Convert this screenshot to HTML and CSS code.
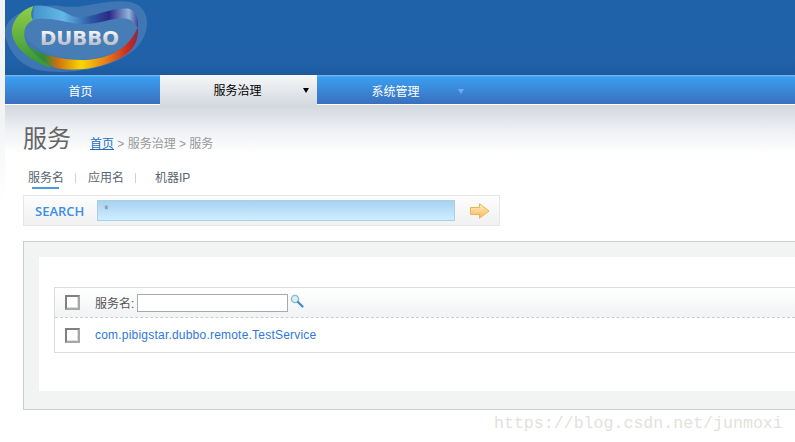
FILE: index.html
```html
<!DOCTYPE html>
<html lang="zh">
<head>
    <meta charset="UTF-8">
    <title>服务</title>
    <link rel="stylesheet" href="styles.css">
</head>
<body>
    <div class="page">
        <div class="header">
            <svg class="logo" width="150" height="75" viewBox="0 0 150 75">
                <defs>
                    <linearGradient id="bottomBand" x1="20" y1="0" x2="138" y2="0" gradientUnits="userSpaceOnUse">
                        <stop offset="0" stop-color="#4f9a3a"/>
                        <stop offset="0.2" stop-color="#2f8a3c"/>
                        <stop offset="0.32" stop-color="#d0700f"/>
                        <stop offset="0.52" stop-color="#f8d800"/>
                        <stop offset="0.72" stop-color="#e8801a"/>
                        <stop offset="0.92" stop-color="#c82a1e"/>
                        <stop offset="1" stop-color="#8a2a50"/>
                    </linearGradient>
                    <linearGradient id="topBand" x1="30" y1="0" x2="140" y2="0" gradientUnits="userSpaceOnUse">
                        <stop offset="0" stop-color="#3f8fc8"/>
                        <stop offset="0.3" stop-color="#64b8e6"/>
                        <stop offset="0.55" stop-color="#2a5aa6"/>
                        <stop offset="0.72" stop-color="#2c2a86"/>
                        <stop offset="0.9" stop-color="#8fb4da"/>
                        <stop offset="1" stop-color="#2c2a86"/>
                    </linearGradient>
                    <linearGradient id="leftBand" x1="0" y1="10" x2="0" y2="60" gradientUnits="userSpaceOnUse">
                        <stop offset="0" stop-color="#8ccb46"/>
                        <stop offset="1" stop-color="#3d9a38"/>
                    </linearGradient>
                    <linearGradient id="word" x1="0" y1="29" x2="0" y2="45" gradientUnits="userSpaceOnUse">
                        <stop offset="0" stop-color="#ffffff"/>
                        <stop offset="1" stop-color="#b8bec6"/>
                    </linearGradient>
                </defs>
                <path d="M5 35C2 18 30 3 60 6C85 10 105-2 130 2C150 6 152 30 138 46C118 68 70 76 38 70C20 66 8 50 5 35Z" fill="#6f96c4" fill-opacity="0.4"/>
                <path d="M24 30C24 14 50 12 72 18C95 24 118 6 133 17C142 26 135 44 112 53C85 63 60 60 42 50C32 45 24 38 24 30Z" fill="#4a80b8" fill-opacity="0.75"/>
                <path d="M34 6C46 4 60 10 72 16C88 22 110 6 130 9C136 12 139 20 138 28C136 26 135 24 132 21C120 13 100 26 80 24C62 22 48 16 33 20Z" fill="url(#topBand)"/>
                <path d="M34 6C20 10 11 22 12 33C13 46 30 62 52 68C40 58 28 50 26 42C22 32 25 24 33 20C30 16 31 10 34 6Z" fill="url(#leftBand)"/>
                <path d="M26 44C38 54 60 60 82 60C100 60 122 54 133 36C136 32 137 28 138 28C139 40 134 50 122 57C102 68 80 72 56 68C44 64 34 54 26 44Z" fill="url(#bottomBand)"/>
                <text class="logo-word" x="40" y="45" textLength="79" lengthAdjust="spacingAndGlyphs" fill="url(#word)">DUBBO</text>
            </svg>
        </div>
        <div class="nav">
            <a class="nav-item first">首页</a>
            <a class="nav-item active">服务治理<i class="arrow"></i></a>
            <a class="nav-item">系统管理<i class="arrow"></i></a>
        </div>
        <div class="content">
            <div class="title-row">
                <h1>服务</h1>
                <div class="crumbs"><a>首页</a> &gt; 服务治理 &gt; 服务</div>
            </div>
            <div class="tabs">
                <span class="tab current">服务名</span>
                <span class="tab">应用名</span>
                <span class="tab last">机器IP</span>
            </div>
            <div class="search-bar">
                <span class="search-label">SEARCH</span>
                <div class="search-input">*</div>
                <svg class="go" width="20" height="16" viewBox="0 0 20 16">
                    <defs>
                        <linearGradient id="goFill" x1="0" y1="0" x2="0" y2="1">
                            <stop offset="0" stop-color="#fff2b0"/>
                            <stop offset="1" stop-color="#ffb070"/>
                        </linearGradient>
                    </defs>
                    <path d="M.5 4.5H9.5V.7L19 8L9.5 15.3V11.5H.5Z" fill="url(#goFill)" stroke="#e3b94e"/>
                </svg>
            </div>
            <div class="panel">
                <div class="panel-inner">
                    <div class="list">
                        <div class="row head">
                            <span class="check"></span>
                            <label class="filter">服务名: <input class="filter-input" type="text"></label>
                            <svg class="lens" width="14" height="14" viewBox="0 0 14 14">
                                <circle cx="5" cy="5" r="3.6" fill="#d8eef8" stroke="#8fb8c8" stroke-width="1.4"/>
                                <path d="M8 8L12.5 12.5" stroke="#3c8ac8" stroke-width="2.2" stroke-linecap="round"/>
                            </svg>
                        </div>
                        <div class="row">
                            <span class="check"></span>
                            <a class="service">com.pibigstar.dubbo.remote.TestService</a>
                        </div>
                    </div>
                </div>
            </div>
        </div>
        <div class="watermark">https://blog.csdn.net/junmoxi</div>
    </div>
</body>
</html>
```
FILE: styles.css
```css
html, body {
    margin: 0;
    height: 442px;
    overflow: hidden;
    background: #fff;
}
body {
    font-family: "Liberation Sans", "Noto Sans CJK SC", sans-serif;
    font-size: 12px;
    color: #555;
}
.page {
    position: relative;
    height: 442px;
    padding-left: 5px;
    background: linear-gradient(#f2f4f4 0, #f2f4f4 120px, #fff 200px);
}
.header {
    height: 75px;
    background: linear-gradient(#2062aa 0, #2062aa 60px, #1d5a9e 75px);
}
.logo {
    display: block;
    margin-left: -5px;
    overflow: visible;
}
.logo-word {
    font-family: "DejaVu Sans", sans-serif;
    font-weight: bold;
    font-size: 20px;
}
.nav {
    display: flex;
    height: 29px;
    border-bottom: 1px solid #fff;
    background: linear-gradient(#6db4f2 0, #6db4f2 1px, #3a9ef0 2px, #3a70bd 29px);
}
.nav-item {
    position: relative;
    width: 155px;
    height: 29px;
    line-height: 35px;
    text-align: center;
    color: #fff;
}
.nav-item.first {
    padding-right: 4px;
    width: 151px;
}
.nav-item.active {
    width: 155px;
    height: 32px;
    padding-right: 2px;
    line-height: 33px;
    color: #000;
    background: linear-gradient(#f6f7f8, #d2d7df);
}
.nav-item:last-child {
    width: 157px;
}
.arrow {
    position: absolute;
    right: 10px;
    top: 14px;
    border: 3px solid transparent;
    border-bottom: 0;
    border-top: 5px solid #6aaef0;
}
.active .arrow {
    right: 8px;
    top: 13px;
    border-top-color: #000;
}
.content {
    height: 337px;
    padding: 0 0 0 18px;
    background: linear-gradient(#d2d7df 0, #eef0f3 25px, #fff 48px);
}
.title-row {
    display: flex;
    align-items: flex-end;
    height: 48px;
}
h1 {
    margin: 0 0 -3px;
    width: 67px;
    font-size: 24px;
    font-weight: normal;
    line-height: 34px;
    color: #666;
}
.crumbs {
    line-height: 20px;
    margin-bottom: -1px;
    color: #999;
}
.crumbs a {
    color: #1e6ec0;
    text-decoration: underline;
}
.tabs {
    display: flex;
    height: 42px;
    padding: 15px 0 0 5px;
    box-sizing: border-box;
    line-height: 20px;
    color: #5a6470;
}
.tab {
    position: relative;
    width: 60px;
}
.tab + .tab::before {
    content: "";
    position: absolute;
    left: -13px;
    top: 5px;
    height: 10px;
    border-left: 1px solid #ccd4d8;
}
.tab.last {
    padding-left: 7px;
}
.tab.current::after {
    content: "";
    position: absolute;
    left: 4px;
    top: 19px;
    width: 27px;
    height: 2px;
    background: #4a9ae0;
}
.search-bar {
    display: flex;
    align-items: center;
    box-sizing: border-box;
    width: 477px;
    height: 31px;
    border: 1px solid #e6e6e6;
    background: linear-gradient(#fdfdfd, #f1f1f1);
}
.search-label {
    width: 73px;
    padding-left: 11px;
    box-sizing: border-box;
    font-family: "Open Sans", "Liberation Sans", sans-serif;
    font-weight: 600;
    font-size: 13px;
    color: #3c8ee6;
}
.search-input {
    box-sizing: border-box;
    width: 358px;
    height: 21px;
    padding-left: 6px;
    line-height: 18px;
    color: #888;
    border: 1px solid #a9cfe8;
    background: linear-gradient(#a8d2f2, #cdeeff);
}
.go {
    margin-left: 15px;
}
.panel {
    box-sizing: border-box;
    height: 169px;
    margin-top: 15px;
    padding: 15px 0 18px 15px;
    border: 1px solid #ccc;
    border-right: 0;
    background: #f2f4f4;
}
.panel-inner {
    box-sizing: border-box;
    height: 134px;
    padding: 30px 0 0 15px;
    background: #fff;
}
.list {
    box-sizing: border-box;
    height: 66px;
    border: 1px solid #ddd;
    border-right: 0;
}
.row {
    display: flex;
    align-items: center;
    height: 34px;
    padding-left: 10px;
}
.row.head {
    box-sizing: border-box;
    height: 30px;
    border-bottom: 1px dashed #ccc;
    background: linear-gradient(#fff, #f1f3f4);
}
.check {
    box-sizing: border-box;
    flex: none;
    width: 15px;
    height: 15px;
    margin-right: 15px;
    border: 2px solid #808080;
    border-right-color: #a8a8a8;
    border-bottom-color: #a8a8a8;
    box-shadow: inset -1px -1px 0 #ddd;
    background: #fff;
}
.filter {
    display: flex;
    align-items: center;
    gap: 2px;
    color: #555;
}
.filter-input {
    box-sizing: border-box;
    width: 151px;
    height: 18px;
    margin: 0 0 0 1px;
    padding: 0;
    border: 1px solid #aaa;
    background: #fff;
}
.lens {
    margin: -3px 0 0 2px;
}
.service {
    font-size: 12px;
    letter-spacing: 0.21px;
    color: #2f78d8;
}
.watermark {
    position: absolute;
    left: 494px;
    top: 413px;
    font-family: "Liberation Mono", monospace;
    font-size: 16.6px;
    line-height: 22px;
    color: #e2e2dc;
}
```
